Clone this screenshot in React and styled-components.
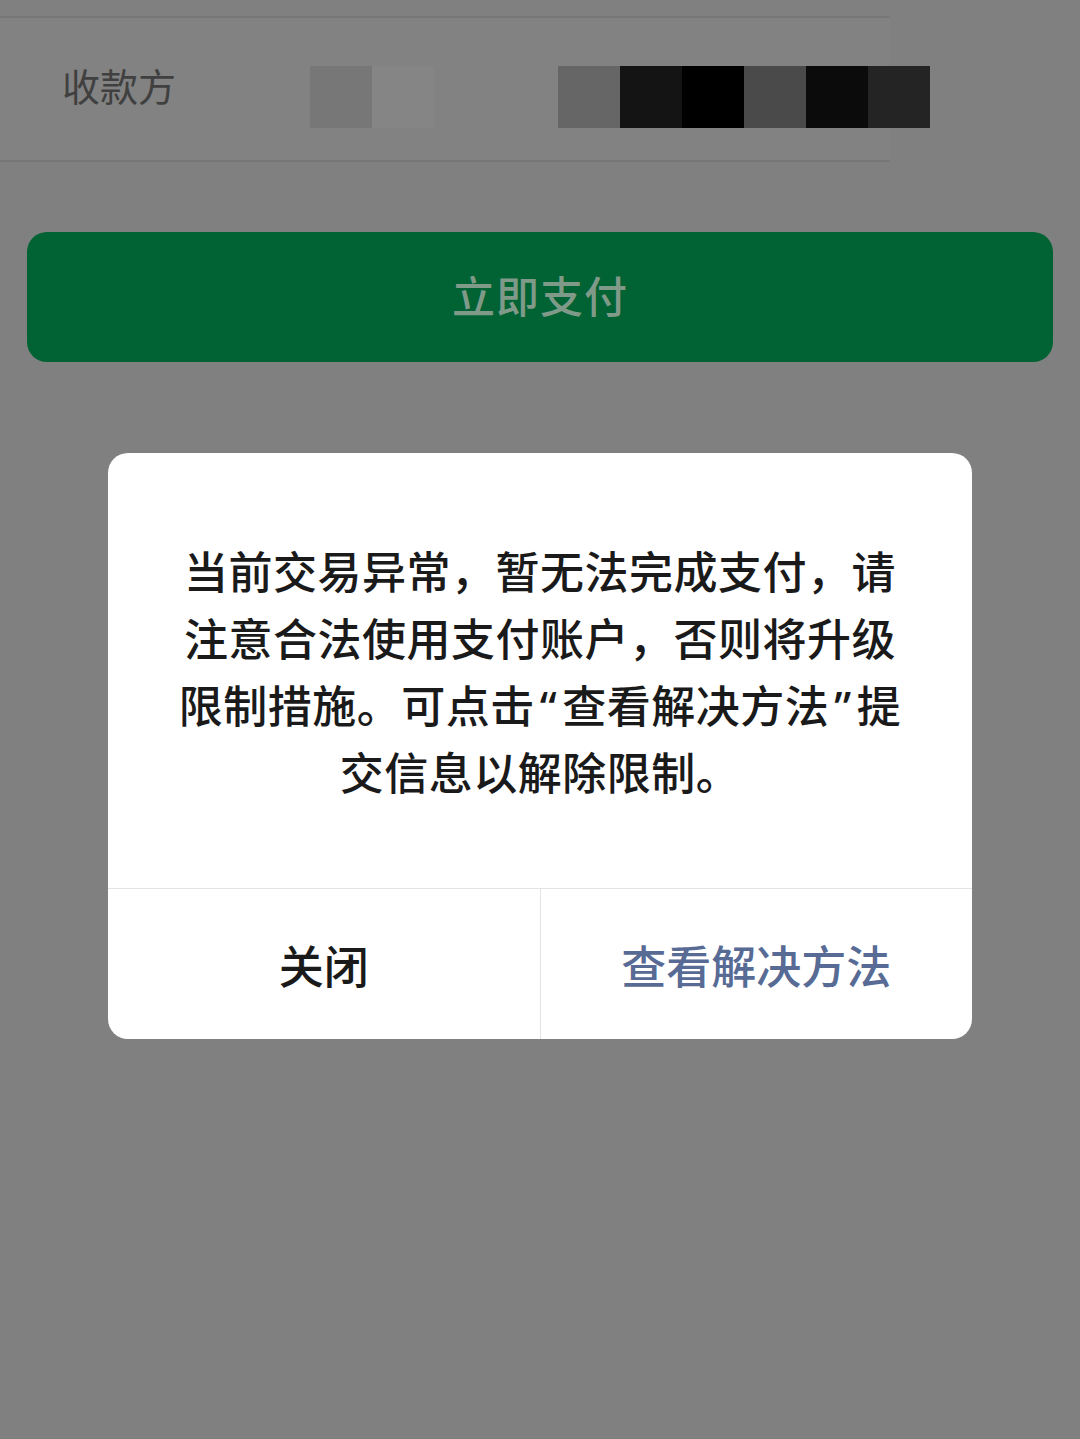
import styled, { createGlobalStyle } from "styled-components";

const GlobalStyle = createGlobalStyle`
  html, body {
    margin: 0;
    padding: 0;
    background: #808080;
    font-family: "Noto Sans CJK SC", "Noto Sans", sans-serif;
  }
  * {
    box-sizing: border-box;
  }
`;

const Page = styled.div`
  position: relative;
  width: 1080px;
  height: 1439px;
  background: #808080;
  overflow: hidden;
`;

const PayeeRow = styled.div`
  margin-top: 16px;
  height: 146px;
  border-top: 2px solid #777777;
  border-bottom: 2px solid #777777;
  display: flex;
  align-items: center;
  padding-left: 62px;
  width: 890px;
  background: #828282;
`;

const Label = styled.span`
  flex-shrink: 0;
  font-size: 38px;
  color: #404040;
  width: 248px;
  margin-top: -10px;
`;

const Mosaic = styled.div`
  flex-shrink: 0;
  display: flex;
  margin-right: ${(p) => p.gap || 0}px;
  margin-top: 16px;
`;

const Tile = styled.div`
  width: 62px;
  height: 62px;
  background: ${(p) => p.color};
`;

const PayButton = styled.div`
  margin: 70px 27px 0;
  height: 130px;
  border-radius: 20px;
  background: #016233;
  display: flex;
  align-items: center;
  justify-content: center;
  font-size: 43px;
  font-weight: 500;
  color: #7f9a88;
  letter-spacing: 1px;
  padding-bottom: 6px;
`;

const Dialog = styled.div`
  position: absolute;
  top: 453px;
  left: 108px;
  width: 864px;
  height: 586px;
  background: #ffffff;
  border-radius: 20px;
  display: flex;
  flex-direction: column;
  overflow: hidden;
`;

const Message = styled.div`
  flex: 1;
  display: flex;
  flex-direction: column;
  align-items: center;
  justify-content: center;
  padding: 4px 40px 0;
  border-bottom: 1px solid #e3e3e3;
`;

const Line = styled.div`
  font-family: "Noto Sans", "Noto Sans CJK SC", sans-serif;
  font-size: 44px;
  font-weight: 500;
  line-height: 67px;
  color: #1a1a1a;
  white-space: nowrap;
  letter-spacing: 0.5px;
`;

const Quote = styled.span`
  margin: 0 5px;
`;

const Actions = styled.div`
  height: 150px;
  display: flex;
`;

const Action = styled.div`
  flex: 1;
  display: flex;
  align-items: center;
  justify-content: center;
  font-size: 45px;
  font-weight: 500;
  color: ${(p) => (p.primary ? "#576b95" : "#1a1a1a")};
  & + & {
    border-left: 1px solid #e3e3e3;
  }
`;

export default function App() {
  return (
    <Page>
      <GlobalStyle />
      <PayeeRow>
        <Label>收款方</Label>
        <Mosaic gap={124}>
          {["#777777", "#858585"].map((c, i) => (
            <Tile key={i} color={c} />
          ))}
        </Mosaic>
        <Mosaic>
          {["#666666", "#141414", "#000000", "#4a4a4a", "#0b0b0b", "#242424"].map((c, i) => (
            <Tile key={i} color={c} />
          ))}
        </Mosaic>
      </PayeeRow>
      <PayButton>立即支付</PayButton>
      <Dialog>
        <Message>
          <Line>当前交易异常，暂无法完成支付，请</Line>
          <Line>注意合法使用支付账户，否则将升级</Line>
          <Line>
            限制措施。可点击<Quote>{"\u201C"}</Quote>查看解决方法<Quote>{"\u201D"}</Quote>提
          </Line>
          <Line>交信息以解除限制。</Line>
        </Message>
        <Actions>
          <Action>关闭</Action>
          <Action primary>查看解决方法</Action>
        </Actions>
      </Dialog>
    </Page>
  );
}
